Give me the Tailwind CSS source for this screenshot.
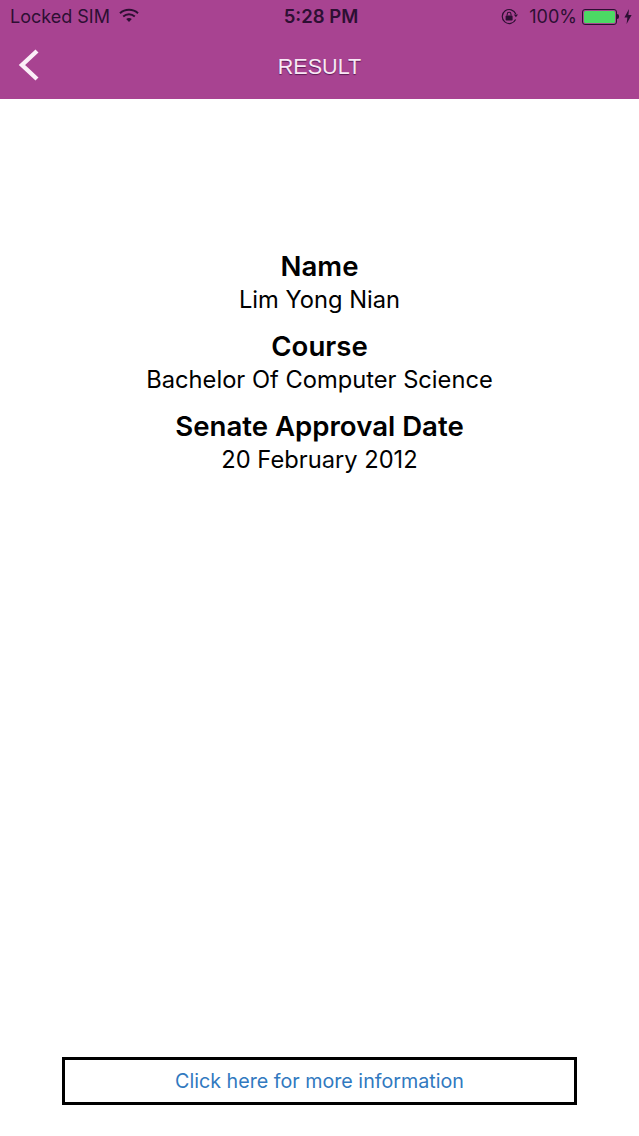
<!DOCTYPE html>
<html lang="en">
<head>
  <meta charset="UTF-8" />
  <title>Result</title>
  <meta name="viewport" content="width=device-width, initial-scale=1.0">
  <script src="https://cdn.jsdelivr.net/npm/@tailwindcss/browser@4"></script>
</head>
<body class="bg-white h-[1136px] w-[639px] overflow-hidden flex flex-col font-['Inter','Liberation_Sans',sans-serif]">
  <!-- header -->
  <div class="bg-[#a84391] h-[99px] shrink-0 flex flex-col">
    <div class="h-[33px] shrink-0 grid grid-cols-3 items-center pl-[10px] pr-[7px] text-[#2d0f33]">
      <div class="flex items-center gap-[9px]">
        <span class="text-[18px] leading-none">Locked SIM</span>
        <svg width="20" height="15" viewBox="0 0 20 15" class="-mt-[3px]">
          <path d="M1 5.2 C6 0.6 14 0.6 19 5.2" fill="none" stroke="#2d0f33" stroke-width="2"/>
          <path d="M4.2 8.4 C7.6 5.4 12.4 5.4 15.8 8.4" fill="none" stroke="#2d0f33" stroke-width="2"/>
          <path d="M7.2 11 C9 9.6 11 9.6 12.8 11 L10 14 Z" fill="#2d0f33"/>
        </svg>
      </div>
      <div class="text-center text-[18.5px] font-semibold leading-none whitespace-nowrap">5:28 PM</div>
      <div class="flex items-center justify-end">
        <svg width="19" height="19" viewBox="0 0 19 19" class="mr-[10px]">
          <path d="M15.8 7 A7 7 0 1 0 15.6 12.5" fill="none" stroke="#2d0f33" stroke-width="1.2"/>
          <path d="M13.8 7.6 L18 7.6 L15.9 10.2 Z" fill="#2d0f33"/>
          <rect x="5.6" y="8.6" width="7" height="5" rx="0.8" fill="#2d0f33"/>
          <path d="M7.2 8.6 V7.2 A1.9 1.9 0 0 1 11 7.2 V8.6" fill="none" stroke="#2d0f33" stroke-width="1.1"/>
        </svg>
        <span class="text-[18px] leading-none mr-[5px]">100%</span>
        <div class="w-[35px] h-[16px] border border-[#2d0f33] rounded-[3px] p-px">
          <div class="w-full h-full bg-[#4cd964] rounded-[1.5px]"></div>
        </div>
        <div class="w-[2px] h-[5px] bg-[#2d0f33] rounded-r-sm mr-[5px]"></div>
        <svg width="8" height="15" viewBox="0 0 8 15">
          <path d="M5 0 L0.4 8.4 H3.4 L2.6 15 L7.6 6 H4.4 Z" fill="#2d0f33"/>
        </svg>
      </div>
    </div>
    <div class="relative flex-1 flex items-center justify-center pt-[2px]">
      <svg width="24" height="34" viewBox="0 0 24 34" class="absolute left-[17px] top-[15px]">
        <path d="M20 3 L5 17 L20 31" fill="none" stroke="#fbeef8" stroke-width="4.4"/>
      </svg>
      <span class="text-[21.6px] text-[#f8e8f5] font-['Liberation_Sans',sans-serif] [text-shadow:0_1px_1px_rgba(60,10,60,0.7)]">RESULT</span>
    </div>
  </div>

  <!-- details -->
  <div class="flex-1 flex flex-col items-center text-center text-black pt-[150px]">
    <div class="text-[27.6px] font-semibold leading-[34px] mb-px">Name</div>
    <div class="text-[23.7px] leading-[32px]">Lim Yong Nian</div>
    <div class="text-[27.6px] font-semibold leading-[34px] mt-[13px] mb-px">Course</div>
    <div class="text-[23.7px] leading-[32px]">Bachelor Of Computer Science</div>
    <div class="text-[27.6px] font-semibold leading-[34px] mt-[13px] mb-px">Senate Approval Date</div>
    <div class="text-[23.7px] leading-[32px]">20 February 2012</div>
  </div>

  <!-- more info button -->
  <div class="flex justify-center pb-[31px]">
    <button class="w-[515px] h-[48px] border-[3px] border-black bg-white text-[#3179bf] text-[19.7px] flex items-center justify-center pt-px">Click here for more information</button>
  </div>
</body>
</html>
